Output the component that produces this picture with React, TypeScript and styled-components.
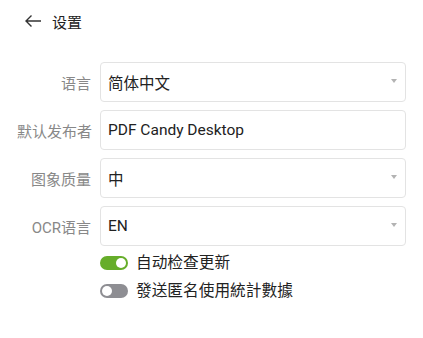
import {useState} from "react";
import styled, {createGlobalStyle} from "styled-components";

const GlobalStyle = createGlobalStyle`
    body {
        margin: 0;
        background: #fff;
        font-family: Roboto, "Noto Sans CJK SC", sans-serif;
        color: #222;
    }
`

const StyledPage = styled.div`
    width: 423px;
    height: 338px;
    box-sizing: border-box;
    padding: 10px 17px 0 17px;
`

const StyledHeader = styled.div`
    display: flex;
    align-items: center;
    gap: 10px;
    height: 22px;
    padding-left: 7px;
    font-size: 15px;
    color: #222;
`

const StyledBack = styled.div`
    display: flex;
    align-items: center;
    svg {
        display: block;
    }
`

const StyledForm = styled.div`
    margin-top: 30px;
    display: grid;
    grid-template-columns: 74px 306px;
    column-gap: 9px;
    row-gap: 8px;
    align-items: center;
`

const StyledLabel = styled.div`
    text-align: right;
    font-size: 15px;
    color: #888;
    white-space: nowrap;
`

const StyledField = styled.div`
    position: relative;
    height: 40px;
    box-sizing: border-box;
    border: 1px solid #e3e3e3;
    border-radius: 4px;
    display: flex;
    align-items: center;
    padding: 0 26px 0 7px;
    font-size: 15.5px;
    color: #222;
`

const StyledCaret = styled.span`
    position: absolute;
    right: 8px;
    top: 16px;
    width: 0;
    height: 0;
    border-left: 3px solid transparent;
    border-right: 3px solid transparent;
    border-top: 4px solid #b3b3b3;
`

const StyledToggles = styled.div`
    grid-column: 2;
    display: flex;
    flex-direction: column;
    gap: 10px;
`

const StyledToggleRow = styled.label`
    display: flex;
    align-items: center;
    gap: 8px;
    font-size: 15.7px;
    line-height: 18px;
    color: #222;
    cursor: pointer;
    height: 18px;
`

const StyledSwitch = styled.span<{ $on: boolean }>`
    position: relative;
    flex: none;
    width: 28px;
    height: 14px;
    border-radius: 7px;
    background: ${p => p.$on ? '#66ad2a' : '#8e8e93'};

    &::after {
        content: '';
        position: absolute;
        top: 2px;
        left: ${p => p.$on ? '16px' : '2px'};
        width: 10px;
        height: 10px;
        border-radius: 50%;
        background: #fff;
    }
`

const fields = [
  {label: '语言', value: '简体中文', select: true},
  {label: '默认发布者', value: 'PDF Candy Desktop', select: false},
  {label: '图象质量', value: '中', select: true},
  {label: 'OCR语言', value: 'EN', select: true},
]

const App = () => {
  const [autoUpdate, setAutoUpdate] = useState(true)
  const [stats, setStats] = useState(false)

  return (
    <StyledPage>
      <GlobalStyle/>
      <StyledHeader>
        <StyledBack>
          <svg width="18" height="14" viewBox="0 0 18 14">
            <path d="M17 7H2M7.5 1.5L2 7l5.5 5.5" fill="none" stroke="#333" strokeWidth="1.4"/>
          </svg>
        </StyledBack>
        <span>设置</span>
      </StyledHeader>
      <StyledForm>
        {fields.map(f =>
          <>
            <StyledLabel key={f.label + 'l'}>{f.label}</StyledLabel>
            <StyledField key={f.label + 'f'}>
              {f.value}
              {f.select && <StyledCaret/>}
            </StyledField>
          </>
        )}
        <StyledToggles>
          <StyledToggleRow onClick={() => setAutoUpdate(!autoUpdate)}>
            <StyledSwitch $on={autoUpdate}/>
            自动检查更新
          </StyledToggleRow>
          <StyledToggleRow onClick={() => setStats(!stats)}>
            <StyledSwitch $on={stats}/>
            發送匿名使用統計數據
          </StyledToggleRow>
        </StyledToggles>
      </StyledForm>
    </StyledPage>
  );
};

export default App;
